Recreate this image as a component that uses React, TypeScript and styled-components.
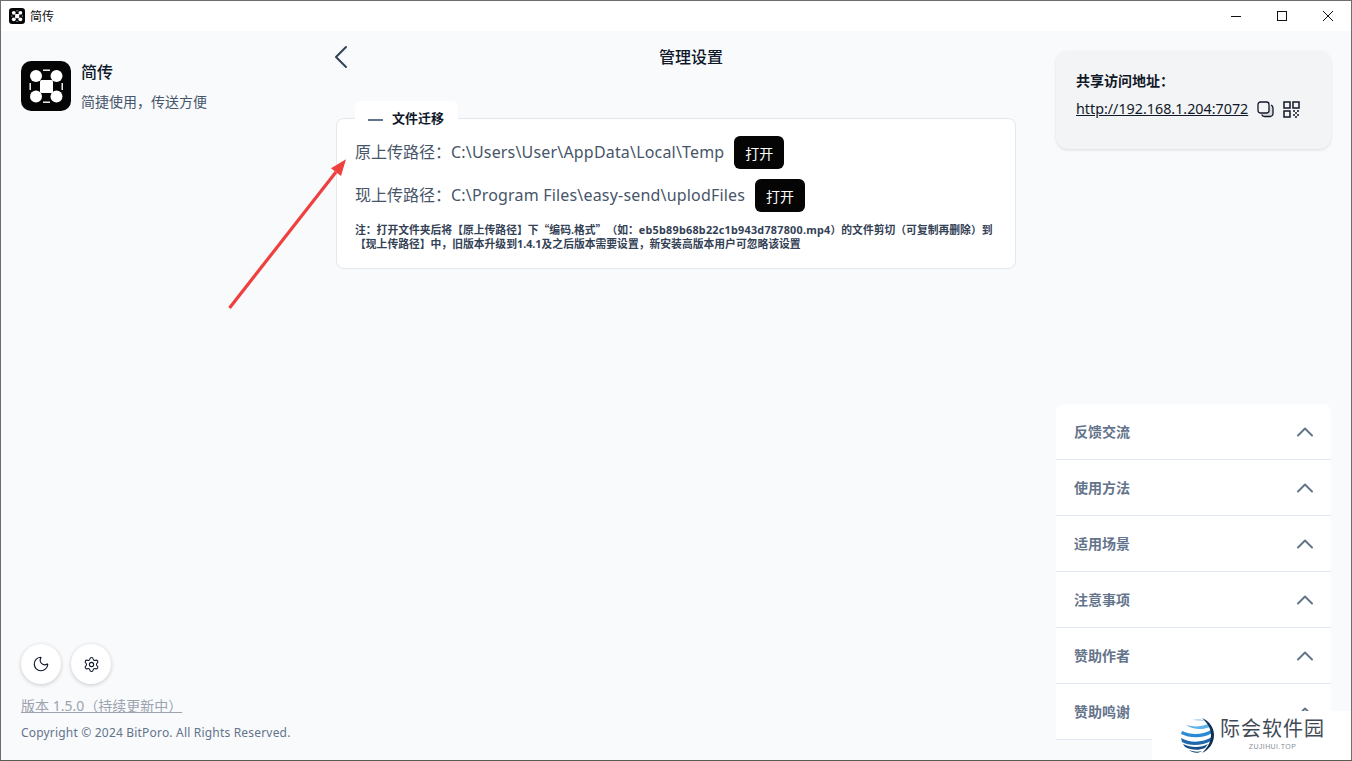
import React from "react";
import styled, { createGlobalStyle } from "styled-components";
import { ChevronUp, Moon, Settings } from "lucide-react";

const Global = createGlobalStyle`
  html, body { margin: 0; padding: 0; width: 100%; height: 100%; overflow: hidden; }
  * { box-sizing: border-box; }
  body { font-family: "Noto Sans", "Noto Sans CJK SC", sans-serif; }
`;

const Windowed = styled.div`
  position: relative;
  width: 1352px;
  height: 761px;
  display: flex;
  flex-direction: column;
  background: #f8fafc;
  border: 1px solid #6e6e6e;
  border-bottom-color: #5a5a50;
  overflow: hidden;
`;
const TitleBar = styled.header`
  height: 30px;
  flex: none;
  background: #fff;
  display: flex;
  align-items: center;
  padding-left: 8px;
  font-size: 12px;
  color: #111;
`;
const TitleText = styled.span`
  flex: 1;
  margin-left: 5px;
`;
const WinButton = styled.button`
  width: 46px;
  height: 30px;
  border: 0;
  padding: 0;
  background: transparent;
  display: flex;
  align-items: center;
  justify-content: center;
  color: #111;
`;
const Body = styled.div`
  flex: 1;
  display: grid;
  grid-template-columns: 335px 680px 1fr;
  min-height: 0;
`;
const Sidebar = styled.aside`
  padding: 30px 0 18px 20px;
  display: flex;
  flex-direction: column;
`;
const Brand = styled.div`
  display: flex;
  gap: 10px;
`;
const BrandText = styled.div`
  display: flex;
  flex-direction: column;
  padding-top: 1px;
`;
const BrandName = styled.div`
  font-size: 16px;
  line-height: 21px;
  font-weight: 500;
  color: #0f172a;
`;
const BrandTag = styled.div`
  font-size: 14px;
  line-height: 20px;
  margin-top: 9px;
  color: #475569;
`;
const RoundRow = styled.div`
  margin-top: auto;
  display: flex;
  gap: 10px;
`;
const RoundButton = styled.button`
  width: 40px;
  height: 40px;
  padding: 0;
  border: 0;
  border-radius: 50%;
  background: #fff;
  color: #0f172a;
  display: flex;
  align-items: center;
  justify-content: center;
  box-shadow: 0 1px 4px rgba(0, 0, 0, 0.2);
`;
const Version = styled.a`
  margin-top: 12px;
  font-size: 14px;
  line-height: 20px;
  color: #9ca3af;
  text-decoration: underline;
`;
const Copyright = styled.div`
  margin-top: 8px;
  font-size: 12px;
  line-height: 18px;
  letter-spacing: 0.19px;
  color: #64748b;
`;
const Main = styled.main`
  position: relative;
  padding-top: 10px;
`;
const Head = styled.div`
  height: 32px;
  display: flex;
  align-items: center;
  justify-content: center;
  padding-left: 30px;
  position: relative;
`;
const HeadTitle = styled.h1`
  margin: 0;
  font-size: 16px;
  line-height: 32px;
  font-weight: 500;
  color: #0f172a;
`;
const BackButton = styled.button`
  position: absolute;
  left: -2px;
  top: 4px;
  border: 0;
  padding: 0;
  background: transparent;
  display: flex;
`;
const Card = styled.section`
  position: relative;
  margin-top: 45px;
  height: 151px;
  background: #fff;
  border: 1px solid #e2e8f0;
  border-radius: 8px;
  padding: 17px 18px 0;
`;
const Legend = styled.div`
  position: absolute;
  left: 18px;
  top: -18px;
  height: 36px;
  width: 103px;
  padding: 7px 0 0 13px;
  background: #fff;
  border-radius: 6px 6px 0 0;
  display: flex;
  gap: 9px;
  font-size: 13px;
  line-height: 20px;
  font-weight: 700;
  color: #0f172a;
`;
const LegendDash = styled.span`
  width: 15px;
  height: 1.5px;
  margin-top: 11px;
  background: #64748b;
`;
const PathRow = styled.div`
  display: flex;
  align-items: center;
  height: 33px;
  margin-bottom: 10px;
  font-size: 16px;
  color: #475569;
`;
const PathText = styled.span`
  white-space: pre;
  margin-bottom: 3px;
`;
const PathValue = styled.span`
  letter-spacing: 0.18px;
`;
const OpenButton = styled.button`
  margin-left: 10px;
  width: 50px;
  height: 33px;
  border: 0;
  border-radius: 6px;
  background: #050505;
  color: #fff;
  font: inherit;
  font-size: 14px;
`;
const Note = styled.p`
  margin: 2px 0 0;
  font-size: 10.8px;
  line-height: 14px;
  font-weight: 700;
  color: #334155;
  text-spacing-trim: space-all;
`;
const CjkMark = styled.span`
  font-family: "Noto Sans CJK SC", sans-serif;
`;
const NoteCode = styled.span`
  letter-spacing: 0.25px;
`;
const Aside = styled.aside`
  padding: 20px 20px 20px 40px;
  display: flex;
  flex-direction: column;
`;
const ShareCard = styled.div`
  height: 98px;
  border-radius: 12px;
  background: #f3f4f6;
  padding: 20px;
  box-shadow: 0 1px 3px rgba(0, 0, 0, 0.12);
`;
const ShareLabel = styled.div`
  font-size: 14px;
  line-height: 20px;
  font-weight: 700;
  color: #111827;
`;
const ShareRow = styled.div`
  display: flex;
  align-items: center;
  margin-top: 8px;
  gap: 9px;
  color: #111827;
`;
const ShareLink = styled.a`
  font-size: 14.3px;
  line-height: 20px;
  color: #111827;
  text-decoration: underline;
`;
const Accordion = styled.div`
  margin-top: 255px;
  background: #fff;
  border-radius: 8px 8px 0 0;
`;
const AccItem = styled.div`
  height: 56px;
  display: flex;
  align-items: center;
  justify-content: space-between;
  padding: 0 12px 0 18px;
  border-bottom: 1px solid #e2e8f0;
  font-size: 14px;
  font-weight: 700;
  color: #64748b;
`;
const AccLabel = styled.span`
  margin-bottom: 2px;
`;
const Arrow = styled.svg`
  position: absolute;
  left: 225px;
  top: 155px;
  pointer-events: none;
`;
const Watermark = styled.div`
  position: absolute;
  right: -1px;
  bottom: -1px;
  width: 200px;
  height: 50px;
  background: #fff;
  display: flex;
`;
const WmGlobe = styled.svg`
  margin: 6px 0 0 28px;
  flex: none;
`;
const WmText = styled.div`
  margin-left: 4px;
  margin-top: 5px;
  display: flex;
  flex-direction: column;
  align-items: center;
`;
const WmName = styled.div`
  font-size: 20px;
  line-height: 26px;
  letter-spacing: 1px;
  color: #3f4a55;
`;
const WmSub = styled.div`
  font-size: 7px;
  line-height: 9px;
  letter-spacing: 0.4px;
  color: #8a9099;
  font-family: "Liberation Sans", sans-serif;
`;

const Logo = ({ size }: { size: number }) => (
  <svg width={size} height={size} viewBox="0 0 50 50">
    <rect width="50" height="50" rx="10" fill="#050505" />
    <g fill="#fff">
      <circle cx="15" cy="15" r="6" />
      <circle cx="35.500" cy="15" r="6" />
      <circle cx="15" cy="35.500" r="6" />
      <circle cx="35.500" cy="35.500" r="6" />
      <rect x="19" y="19" width="13" height="13" rx="1.5" />
      <rect x="22" y="8.500" width="7" height="1.400" />
      <rect x="22" y="40.500" width="7" height="1.400" />
      <rect x="8.500" y="22" width="1.400" height="7" />
      <rect x="40.500" y="22" width="1.400" height="7" />
    </g>
  </svg>
);

const CopyIcon = () => (
  <svg width="17" height="17" viewBox="0 0 17 17" fill="none" stroke="#111827" strokeWidth="1.3">
    <path d="M14 4.200c1.200.4 2 1.400 2 2.800v5.500a3 3 0 0 1-3 3H7.500c-1.400 0-2.400-.8-2.800-2" fill="#d8dade" />
    <rect x="1" y="1" width="11" height="11" rx="2.5" fill="#f3f4f6" />
  </svg>
);

const QrIcon = () => (
  <svg width="17" height="17" viewBox="0 0 17 17" fill="none" stroke="#111827" strokeWidth="1.5">
    <rect x="1" y="1" width="6" height="6" />
    <rect x="10" y="1" width="6" height="6" />
    <rect x="1" y="10" width="6" height="6" />
    <path d="M10 10h2M14 10h2M12 12h2M10 14h2M14 14h2M12 16h2" strokeWidth="1.300" />
  </svg>
);

const accordionItems = ["反馈交流", "使用方法", "适用场景", "注意事项", "赞助作者", "赞助鸣谢"];

export default function App() {
  return (
    <>
      <Global />
      <Windowed>
        <TitleBar>
          <Logo size={16} />
          <TitleText>简传</TitleText>
          <WinButton>
            <svg width="10" height="10" viewBox="0 0 10 10" stroke="#111" strokeWidth="1"><path d="M0 5.500h10" /></svg>
          </WinButton>
          <WinButton>
            <svg width="10" height="10" viewBox="0 0 10 10" fill="none" stroke="#111" strokeWidth="1"><rect x=".5" y=".5" width="9" height="9" /></svg>
          </WinButton>
          <WinButton>
            <svg width="10" height="10" viewBox="0 0 10 10" stroke="#111" strokeWidth="1"><path d="M0 0l10 10M10 0L0 10" /></svg>
          </WinButton>
        </TitleBar>
        <Body>
          <Sidebar>
            <Brand>
              <Logo size={50} />
              <BrandText>
                <BrandName>简传</BrandName>
                <BrandTag>简捷使用，传送方便</BrandTag>
              </BrandText>
            </Brand>
            <RoundRow>
              <RoundButton><Moon size={18} strokeWidth={1.5} /></RoundButton>
              <RoundButton><Settings size={17} strokeWidth={1.5} /></RoundButton>
            </RoundRow>
            <Version>版本 1.5.0（持续更新中）</Version>
            <Copyright>Copyright © 2024 BitPoro. All Rights Reserved.</Copyright>
          </Sidebar>
          <Main>
            <Head>
              <BackButton>
                <svg width="14" height="24" viewBox="0 0 14 24" fill="none" stroke="#334155" strokeWidth="2" strokeLinecap="round" strokeLinejoin="round">
                  <path d="M12 2L2 12l10 10" />
                </svg>
              </BackButton>
              <HeadTitle>管理设置</HeadTitle>
            </Head>
            <Card>
              <Legend><LegendDash />文件迁移</Legend>
              <PathRow>
                <PathText>原上传路径：<PathValue>C:\Users\User\AppData\Local\Temp</PathValue></PathText>
                <OpenButton>打开</OpenButton>
              </PathRow>
              <PathRow>
                <PathText>现上传路径：<PathValue>C:\Program Files\easy-send\uplodFiles</PathValue></PathText>
                <OpenButton>打开</OpenButton>
              </PathRow>
              <Note>
                注：打开文件夹后将【原上传路径】下<CjkMark>“</CjkMark>编码.格式<CjkMark>”</CjkMark>（如：<NoteCode>eb5b89b68b22c1b943d787800.mp4</NoteCode>）的文件剪切（可复制再删除）到【现上传路径】中，旧版本升级到1.4.1及之后版本需要设置，新安装高版本用户可忽略该设置
              </Note>
            </Card>
          </Main>
          <Aside>
            <ShareCard>
              <ShareLabel>共享访问地址：</ShareLabel>
              <ShareRow>
                <ShareLink>http://192.168.1.204:7072</ShareLink>
                <CopyIcon />
                <QrIcon />
              </ShareRow>
            </ShareCard>
            <Accordion>
              {accordionItems.map((t) => (
                <AccItem key={t}>
                  <AccLabel>{t}</AccLabel>
                  <ChevronUp size={28} strokeWidth={1.7} color="#64748b" />
                </AccItem>
              ))}
            </Accordion>
          </Aside>
        </Body>
        <Arrow width="130" height="160" viewBox="0 0 130 160">
          <path d="M3.500 152L110 16" stroke="#ef4040" strokeWidth="3.200" fill="none" />
          <path d="M120 3.300L105 12.300 115 20z" fill="#ef4040" />
        </Arrow>
        <Watermark>
          <WmGlobe width="36" height="38" viewBox="0 0 36 38" fill="none">
            <path d="M12 3c5-1.500 10-1 13 1-5-.5-9-.5-13-1z" fill="#9ccfee" />
            <path d="M6 8c7 2 15 2 22-1l2 3c-7 3-17 3-24-2z" fill="#5fb2e6" />
            <path d="M2 14c9 4 20 4 29-1l1 3c-9 6-23 5-31 1z" fill="#2c8ad4" />
            <path d="M1 21c9 5 21 5 31-1l-1 4c-9 5-22 5-29 1z" fill="#1f68ad" />
            <path d="M3 27c8 4 18 4 25 0l-3 4c-7 3-14 2-20-1z" fill="#174f88" />
            <path d="M9 33c5 2 9 2 13 1-4 3-9 2-13-1z" fill="#123f70" />
            <path d="M22 1c7 3 12 9 12 17s-5 15-12 18c4-4 9-10 9-18S26 5 22 1z" fill="#0f2f55" />
          </WmGlobe>
          <WmText>
            <WmName>际会软件园</WmName>
            <WmSub>ZUJIHUI.TOP</WmSub>
          </WmText>
        </Watermark>
      </Windowed>
    </>
  );
}
